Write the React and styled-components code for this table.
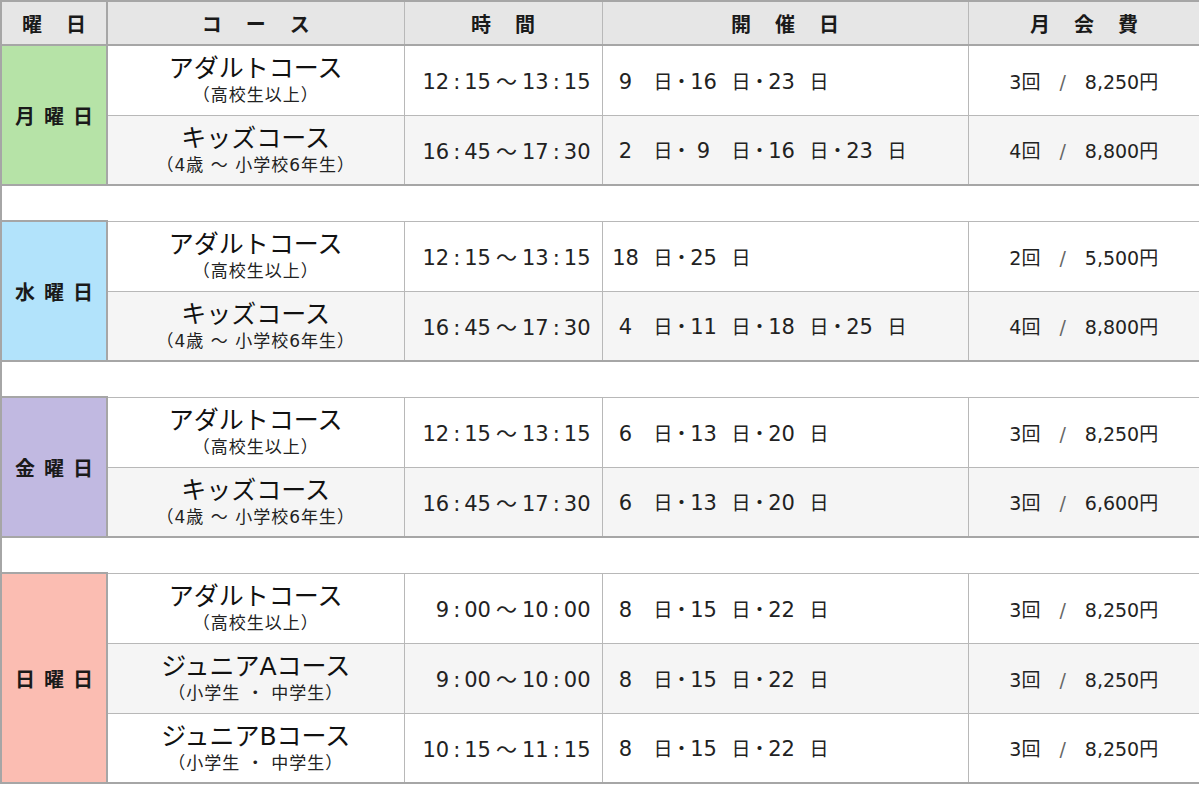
import React from 'react';
import styled, { createGlobalStyle } from 'styled-components';

const GlobalStyle = createGlobalStyle`
  body {
    margin: 0;
    background: #fff;
    font-family: "DejaVu Sans", "Noto Sans CJK JP", sans-serif;
    color: #1a1a1a;
  }
`;

const LINE = '#b8b8b8';
const DARK_LINE = '#a6a6a6';

const Table = styled.table`
  width: 1199px;
  border-collapse: collapse;
  table-layout: fixed;
`;

const HeadCell = styled.th`
  height: 42px;
  padding: 0;
  background: #e6e6e6;
  border: 1px solid ${LINE};
  border-bottom: 2px solid ${DARK_LINE};
  border-top: 2px solid ${DARK_LINE};
  font-family: "Noto Sans CJK JP", sans-serif;
  font-size: 20px;
  font-weight: 700;
  text-align: center;
  white-space: nowrap;
  &:first-child {
    border-left: 2px solid ${DARK_LINE};
    border-right: 2px solid ${DARK_LINE};
  }
`;

const HeadLabel = styled.span`
  display: inline-flex;
  gap: ${props => props.$gap}px;
`;

const Row = styled.tr`
  height: 70px;
  background: ${props => (props.$alt ? '#f5f5f5' : '#fff')};
`;

const DayCell = styled.td`
  background: ${props => props.$color};
  border: 2px solid ${DARK_LINE};
  text-align: center;
  font-family: "Noto Sans CJK JP", sans-serif;
  font-size: 20px;
  font-weight: 700;
  white-space: nowrap;
  padding: 0;
`;

const Cell = styled.td`
  border: 1px solid ${LINE};
  border-bottom: ${props => (props.$last ? `2px solid ${DARK_LINE}` : `1px solid ${LINE}`)};
  padding: 0;
  &:last-child {
    border-right: 2px solid ${DARK_LINE};
  }
`;

const CourseCell = styled(Cell)`
  text-align: center;
`;

const CourseName = styled.div`
  font-size: 25px;
  line-height: 28px;
  color: #111;
`;

const CourseNote = styled.div`
  font-size: 17px;
  line-height: 20px;
  letter-spacing: 1px;
  margin-top: 2px;
  color: #222;
`;

const TimeCell = styled(Cell)`
  font-size: 21px;
  text-align: right;
  padding-right: 11px;
  white-space: nowrap;
  color: #222;
`;

const Colon = styled.span`
  margin: 0 4px;
`;

const Tilde = styled.span`
  font-family: "Noto Sans CJK JP", sans-serif;
  margin: 0 5px;
`;

const DatesCell = styled(Cell)`
  padding-left: 9px;
  white-space: nowrap;
  color: #222;
`;

const DateItem = styled.span`
  display: inline-flex;
  align-items: baseline;
`;

const DateNum = styled.span`
  display: inline-block;
  width: 28px;
  text-align: center;
  font-size: 21px;
`;

const DateDay = styled.span`
  font-family: "Noto Sans CJK JP", sans-serif;
  font-size: 19px;
  margin-left: 14px;
`;

const DateDot = styled.span`
  display: inline-flex;
  justify-content: center;
  width: 10px;
  margin: 0 3px 0 4px;
  font-family: "Noto Sans CJK JP", sans-serif;
  font-size: 19px;
`;

const FeeCell = styled(Cell)`
  font-size: 19px;
  text-align: center;
  white-space: nowrap;
  color: #222;
`;

const Kai = styled.span`
  font-family: "Noto Sans CJK JP", sans-serif;
`;

const Slash = styled.span`
  color: #666;
  margin: 0 19px;
`;

const SpacerCell = styled.td`
  height: 34px;
  padding: 0;
  background: #fff;
  border-left: 2px solid ${DARK_LINE};
  border-right: 1px solid #e6e6e6;
`;

const ADULT = { name: 'アダルトコース', note: '（高校生以上）' };
const KIDS = { name: 'キッズコース', note: '（4歳 〜 小学校6年生）' };
const JUNIOR_A = { name: 'ジュニアAコース', note: '（小学生 ・ 中学生）' };
const JUNIOR_B = { name: 'ジュニアBコース', note: '（小学生 ・ 中学生）' };

const headers = [
  { label: '曜日', gap: 24 },
  { label: 'コース', gap: 24 },
  { label: '時間', gap: 24 },
  { label: '開催日', gap: 24 },
  { label: '月会費', gap: 24 },
];

const schedule = [
  {
    day: '月曜日',
    color: '#b6e3a7',
    rows: [
      { course: ADULT, time: ['12', '15', '13', '15'], dates: [9, 16, 23], count: 3, price: '8,250' },
      { course: KIDS, time: ['16', '45', '17', '30'], dates: [2, 9, 16, 23], count: 4, price: '8,800' },
    ],
  },
  {
    day: '水曜日',
    color: '#b2e3fb',
    rows: [
      { course: ADULT, time: ['12', '15', '13', '15'], dates: [18, 25], count: 2, price: '5,500' },
      { course: KIDS, time: ['16', '45', '17', '30'], dates: [4, 11, 18, 25], count: 4, price: '8,800' },
    ],
  },
  {
    day: '金曜日',
    color: '#c1b9e1',
    rows: [
      { course: ADULT, time: ['12', '15', '13', '15'], dates: [6, 13, 20], count: 3, price: '8,250' },
      { course: KIDS, time: ['16', '45', '17', '30'], dates: [6, 13, 20], count: 3, price: '6,600' },
    ],
  },
  {
    day: '日曜日',
    color: '#fbbdb2',
    rows: [
      { course: ADULT, time: ['9', '00', '10', '00'], dates: [8, 15, 22], count: 3, price: '8,250' },
      { course: JUNIOR_A, time: ['9', '00', '10', '00'], dates: [8, 15, 22], count: 3, price: '8,250' },
      { course: JUNIOR_B, time: ['10', '15', '11', '15'], dates: [8, 15, 22], count: 3, price: '8,250' },
    ],
  },
];

const Spaced = ({ text, gap }) => (
  <HeadLabel $gap={gap}>
    {[...text].map((ch, i) => (
      <span key={i}>{ch}</span>
    ))}
  </HeadLabel>
);

const TimeRange = ({ time }) => (
  <>
    {time[0]}<Colon>:</Colon>{time[1]}
    <Tilde>～</Tilde>
    {time[2]}<Colon>:</Colon>{time[3]}
  </>
);

const DateList = ({ dates }) => (
  <>
    {dates.map((d, i) => (
      <DateItem key={d}>
        <DateNum>{d}</DateNum>
        <DateDay>日</DateDay>
        {i < dates.length - 1 && <DateDot>・</DateDot>}
      </DateItem>
    ))}
  </>
);

const DayGroup = ({ group, withSpacer }) => (
  <>
    {group.rows.map((row, i) => {
      const last = i === group.rows.length - 1;
      return (
        <Row key={i} $alt={i % 2 === 1}>
          {i === 0 && (
            <DayCell rowSpan={group.rows.length} $color={group.color}>
              <Spaced text={group.day} gap={9} />
            </DayCell>
          )}
          <CourseCell $last={last}>
            <CourseName>{row.course.name}</CourseName>
            <CourseNote>{row.course.note}</CourseNote>
          </CourseCell>
          <TimeCell $last={last}>
            <TimeRange time={row.time} />
          </TimeCell>
          <DatesCell $last={last}>
            <DateList dates={row.dates} />
          </DatesCell>
          <FeeCell $last={last}>
            {row.count}<Kai>回</Kai>
            <Slash>/</Slash>
            {row.price}<Kai>円</Kai>
          </FeeCell>
        </Row>
      );
    })}
    {withSpacer && (
      <tr>
        <SpacerCell colSpan={5} />
      </tr>
    )}
  </>
);

const App = () => (
  <>
    <GlobalStyle />
    <Table>
      <colgroup>
        <col style={{ width: 106 }} />
        <col style={{ width: 297 }} />
        <col style={{ width: 198 }} />
        <col style={{ width: 366 }} />
        <col style={{ width: 232 }} />
      </colgroup>
      <thead>
        <tr>
          {headers.map(h => (
            <HeadCell key={h.label}>
              <Spaced text={h.label} gap={h.gap} />
            </HeadCell>
          ))}
        </tr>
      </thead>
      <tbody>
        {schedule.map((group, i) => (
          <DayGroup key={group.day} group={group} withSpacer={i < schedule.length - 1} />
        ))}
      </tbody>
    </Table>
  </>
);

export default App;
